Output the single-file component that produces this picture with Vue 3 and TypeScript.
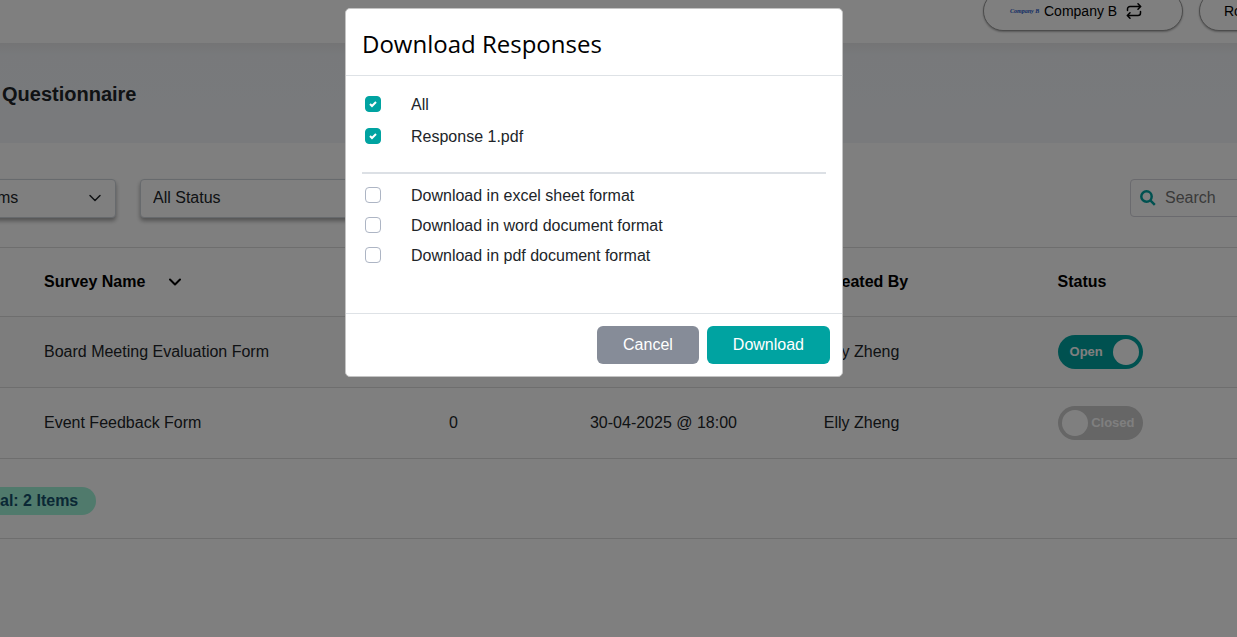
<script setup lang="ts">
import { reactive, ref } from 'vue'

interface Survey {
  name: string
  count: string
  date: string
  author: string
  open: boolean
}

const surveys = reactive<Survey[]>([
  { name: 'Board Meeting Evaluation Form', count: '', date: '', author: 'Elly Zheng', open: true },
  { name: 'Event Feedback Form', count: '0', date: '30-04-2025 @ 18:00', author: 'Elly Zheng', open: false },
])

const files = reactive([
  { id: 'all', label: 'All', checked: true },
  { id: 'response-1', label: 'Response 1.pdf', checked: true },
])

const formats = reactive([
  { id: 'excel', label: 'Download in excel sheet format', checked: false },
  { id: 'word', label: 'Download in word document format', checked: false },
  { id: 'pdf', label: 'Download in pdf document format', checked: false },
])

const search = ref('')
</script>

<template>
  <div class="app">
    <div class="page">
      <header class="topbar">
        <button class="pill company" type="button">
          <span class="logo" aria-hidden="true">Company B</span>
          <span>Company B</span>
          <svg class="swap" viewBox="0 0 16 16" aria-hidden="true">
            <path d="M1.500 7.500V6a2.500 2.500 0 0 1 2.500-2.500h10.500M12 .8l2.700 2.700L12 6.200M14.500 8.500V10a2.500 2.500 0 0 1-2.500 2.500H1.500M4 9.800L1.300 12.500L4 15.200" />
          </svg>
        </button>
        <button class="pill role" type="button">Ro</button>
      </header>

      <section class="banner">
        <h1>Questionnaire</h1>
      </section>

      <section class="toolbar">
        <div class="select-box forms">
          <select aria-label="Forms"><option>ms</option></select>
          <svg class="chevron" viewBox="0 0 16 16" aria-hidden="true"><path d="M3 5.500l5 5 5-5" /></svg>
        </div>
        <div class="select-box status">
          <select aria-label="Status"><option>All Status</option></select>
        </div>
        <label class="search">
          <svg viewBox="0 0 16 16" aria-hidden="true">
            <circle cx="6.500" cy="6.500" r="5.200" /><path d="M10.300 10.300l4.500 4.500" />
          </svg>
          <input v-model="search" type="text" placeholder="Search" aria-label="Search" />
        </label>
      </section>

      <table class="surveys">
        <colgroup>
          <col class="c-name" /><col class="c-count" /><col class="c-date" /><col class="c-author" /><col />
        </colgroup>
        <thead>
          <tr>
            <th>
              <span class="sort">
                Survey Name
                <svg class="chevron strong" viewBox="0 0 16 16" aria-hidden="true"><path d="M3 5.500l5 5 5-5" /></svg>
              </span>
            </th>
            <th></th>
            <th></th>
            <th>Created By</th>
            <th>Status</th>
          </tr>
        </thead>
        <tbody>
          <tr v-for="survey in surveys" :key="survey.name">
            <td>{{ survey.name }}</td>
            <td>{{ survey.count }}</td>
            <td>{{ survey.date }}</td>
            <td>{{ survey.author }}</td>
            <td>
              <label class="toggle" :class="{ on: survey.open }">
                <input v-model="survey.open" type="checkbox" />
                <span class="caption">{{ survey.open ? 'Open' : 'Closed' }}</span>
                <span class="knob"></span>
              </label>
            </td>
          </tr>
        </tbody>
      </table>

      <footer class="summary"><span class="total">al: 2 Items</span></footer>
    </div>

    <div class="backdrop">
      <div class="dialog" role="dialog" aria-modal="true" aria-labelledby="dialog-title">
        <div class="dialog-head"><h2 id="dialog-title">Download Responses</h2></div>
        <div class="dialog-body">
          <div class="files">
            <div v-for="file in files" :key="file.id" class="check">
              <input :id="file.id" v-model="file.checked" type="checkbox" />
              <svg v-if="file.checked" class="tick" viewBox="0 0 16 16" aria-hidden="true"><path d="M5 8l2 2 4-4" /></svg>
              <label :for="file.id">{{ file.label }}</label>
            </div>
          </div>
          <hr />
          <div class="formats">
            <div v-for="format in formats" :key="format.id" class="check">
              <input :id="format.id" v-model="format.checked" type="checkbox" />
              <svg v-if="format.checked" class="tick" viewBox="0 0 16 16" aria-hidden="true"><path d="M5 8l2 2 4-4" /></svg>
              <label :for="format.id">{{ format.label }}</label>
            </div>
          </div>
        </div>
        <div class="dialog-foot">
          <button class="btn cancel" type="button">Cancel</button>
          <button class="btn download" type="button">Download</button>
        </div>
      </div>
    </div>
  </div>
</template>

<style>
body {
  margin: 0;
  background: #fff;
}
</style>

<style scoped>
.app,
.app * {
  box-sizing: border-box;
}

.app {
  min-height: 100vh;
  overflow: hidden;
  color: #212529;
  font: 16px/24px 'Liberation Sans', Arial, sans-serif;
}

button,
input,
select {
  font: inherit;
  color: inherit;
}

svg {
  fill: none;
  stroke: currentColor;
  flex: none;
}

.topbar {
  display: flex;
  justify-content: flex-end;
  align-items: flex-end;
  gap: 16px;
  height: 43px;
  padding-bottom: 12px;
  overflow: hidden;
}

.pill {
  display: flex;
  align-items: center;
  flex: none;
  height: 40px;
  padding: 0 24px;
  border: 1px solid #999;
  border-radius: 20px;
  background: #fff;
  box-shadow: 0 1px 2px rgba(0, 0, 0, 0.3);
  color: #000;
  font-size: 14px;
}

.company {
  width: 200px;
}

.role {
  width: 120px;
  margin-right: -82px;
}

.logo {
  width: 28px;
  margin: 0 6px 0 2px;
  color: #2456c8;
  font: italic bold 6px/16px 'Liberation Serif', serif;
  white-space: nowrap;
}

.swap {
  width: 16px;
  height: 16px;
  margin-left: 9px;
  stroke-width: 1.500;
  stroke-linecap: round;
  stroke-linejoin: round;
}

.banner {
  display: flex;
  align-items: center;
  height: 100px;
  padding: 2px 2px 0;
  background: linear-gradient(#e9e9eb, #f0f3f7 12px, #f3f5f9);
}

h1 {
  margin: 0;
  font-size: 20px;
  line-height: 28px;
}

.toolbar {
  display: flex;
  align-items: flex-start;
  gap: 24px;
  height: 104px;
  padding-top: 36px;
}

.select-box {
  position: relative;
  display: flex;
  height: 39px;
  border: 1px solid #ced4da;
  border-radius: 4px;
  background: #fff;
  box-shadow: 0 3px 4px rgba(0, 0, 0, 0.35);
}

.select-box select {
  width: 100%;
  padding: 0 12px 2px;
  border: 0;
  background: transparent;
  appearance: none;
}

.forms {
  width: 132px;
  margin-left: -16px;
}

.status {
  width: 240px;
}

.chevron {
  width: 16px;
  height: 16px;
  stroke-width: 1.500;
  stroke-linecap: round;
  stroke-linejoin: round;
}

.select-box .chevron {
  position: absolute;
  right: 12px;
  top: 10px;
}

.search {
  display: flex;
  align-items: center;
  gap: 9px;
  width: 180px;
  height: 38px;
  margin-right: -73px;
  margin-left: auto;
  padding: 0 9px;
  border: 1px solid #d4d4dc;
  border-radius: 4px;
}

.search svg {
  width: 16px;
  height: 16px;
  color: #00a3a1;
  stroke-width: 2.500;
}

.search input {
  min-width: 0;
  padding: 0;
  border: 0;
  background: transparent;
  outline: 0;
}

.search input::placeholder {
  color: #757575;
}

.surveys {
  width: 100%;
  table-layout: fixed;
  border-collapse: collapse;
  border-top: 1px solid #dcdcdc;
}

.c-name {
  width: 35%;
}

.c-count {
  width: 11.4%;
}

.c-date,
.c-author {
  width: 18.9%;
}

th,
td {
  padding: 0 0 0 16px;
  border-bottom: 1px solid #dcdcdc;
  text-align: left;
  white-space: nowrap;
}

th:first-child,
td:first-child {
  padding-left: 44px;
}

th {
  height: 69px;
  color: #000;
}

td {
  height: 71px;
}

tbody tr:first-child {
  background: #fafafa;
}

.sort {
  display: flex;
  align-items: center;
  gap: 22px;
}

.strong {
  stroke-width: 2;
}

.toggle {
  display: flex;
  flex-direction: row-reverse;
  align-items: center;
  justify-content: space-between;
  width: 85px;
  height: 34px;
  padding: 4px 8px 4px 4px;
  border-radius: 17px;
  background: #ccc;
  color: #fff;
  font: bold 13px/16px 'Liberation Sans', Arial, sans-serif;
}

.toggle.on {
  flex-direction: row;
  padding: 4px 4px 4px 12px;
  background: #00a3a1;
}

.toggle input {
  position: absolute;
  opacity: 0;
}

.knob {
  width: 26px;
  height: 26px;
  border-radius: 50%;
  background: #fff;
}

.summary {
  display: flex;
  align-items: center;
  height: 80px;
  padding-top: 4px;
  border-bottom: 1px solid #dcdcdc;
}

.total {
  padding: 0 18px 0 0;
  border-radius: 0 14px 14px 0;
  background: #a1f4d9;
  color: #14506a;
  font-weight: bold;
  line-height: 28px;
}

.backdrop {
  position: fixed;
  inset: 0;
  display: flex;
  justify-content: center;
  align-items: flex-start;
  padding: 8px 49px 8px 0;
  background: rgba(0, 0, 0, 0.5);
}

.dialog {
  width: 498px;
  border: 1px solid #c4c4c4;
  border-radius: 5px;
  background: #fff;
}

.dialog-head {
  padding: 18px 16px 14px;
  border-bottom: 1px solid #dee2e6;
}

h2 {
  margin: 0;
  color: #000;
  font: 400 24px/34px 'Open Sans', 'Noto Sans', sans-serif;
}

.dialog-body {
  display: flex;
  flex-direction: column;
  height: 237px;
  padding: 12px 16px;
}

.check {
  position: relative;
  display: flex;
  align-items: center;
  gap: 30px;
  height: 30px;
  padding-left: 3px;
}

.files .check {
  height: 32px;
}

.check label {
  padding-top: 2px;
}

.check input {
  width: 16px;
  height: 16px;
  margin: 0;
  border: 1px solid #adb5c4;
  border-radius: 4px;
  background: #fff;
  appearance: none;
}

.check input:checked {
  border-color: #00a3a1;
  background: #00a3a1;
}

.tick {
  position: absolute;
  left: 3px;
  width: 16px;
  height: 16px;
  color: #fff;
  stroke-width: 2;
  pointer-events: none;
}

hr {
  width: 100%;
  height: 2px;
  margin: 20px 0 6px;
  border: 0;
  background: #dce0e5;
}

.dialog-foot {
  display: flex;
  justify-content: flex-end;
  gap: 8px;
  padding: 12px;
  border-top: 1px solid #dee2e6;
}

.btn {
  height: 38px;
  padding: 0 26px;
  border: 0;
  border-radius: 6px;
  color: #fff;
}

.cancel {
  background: #868c98;
}

.download {
  background: #00a3a1;
}
</style>
